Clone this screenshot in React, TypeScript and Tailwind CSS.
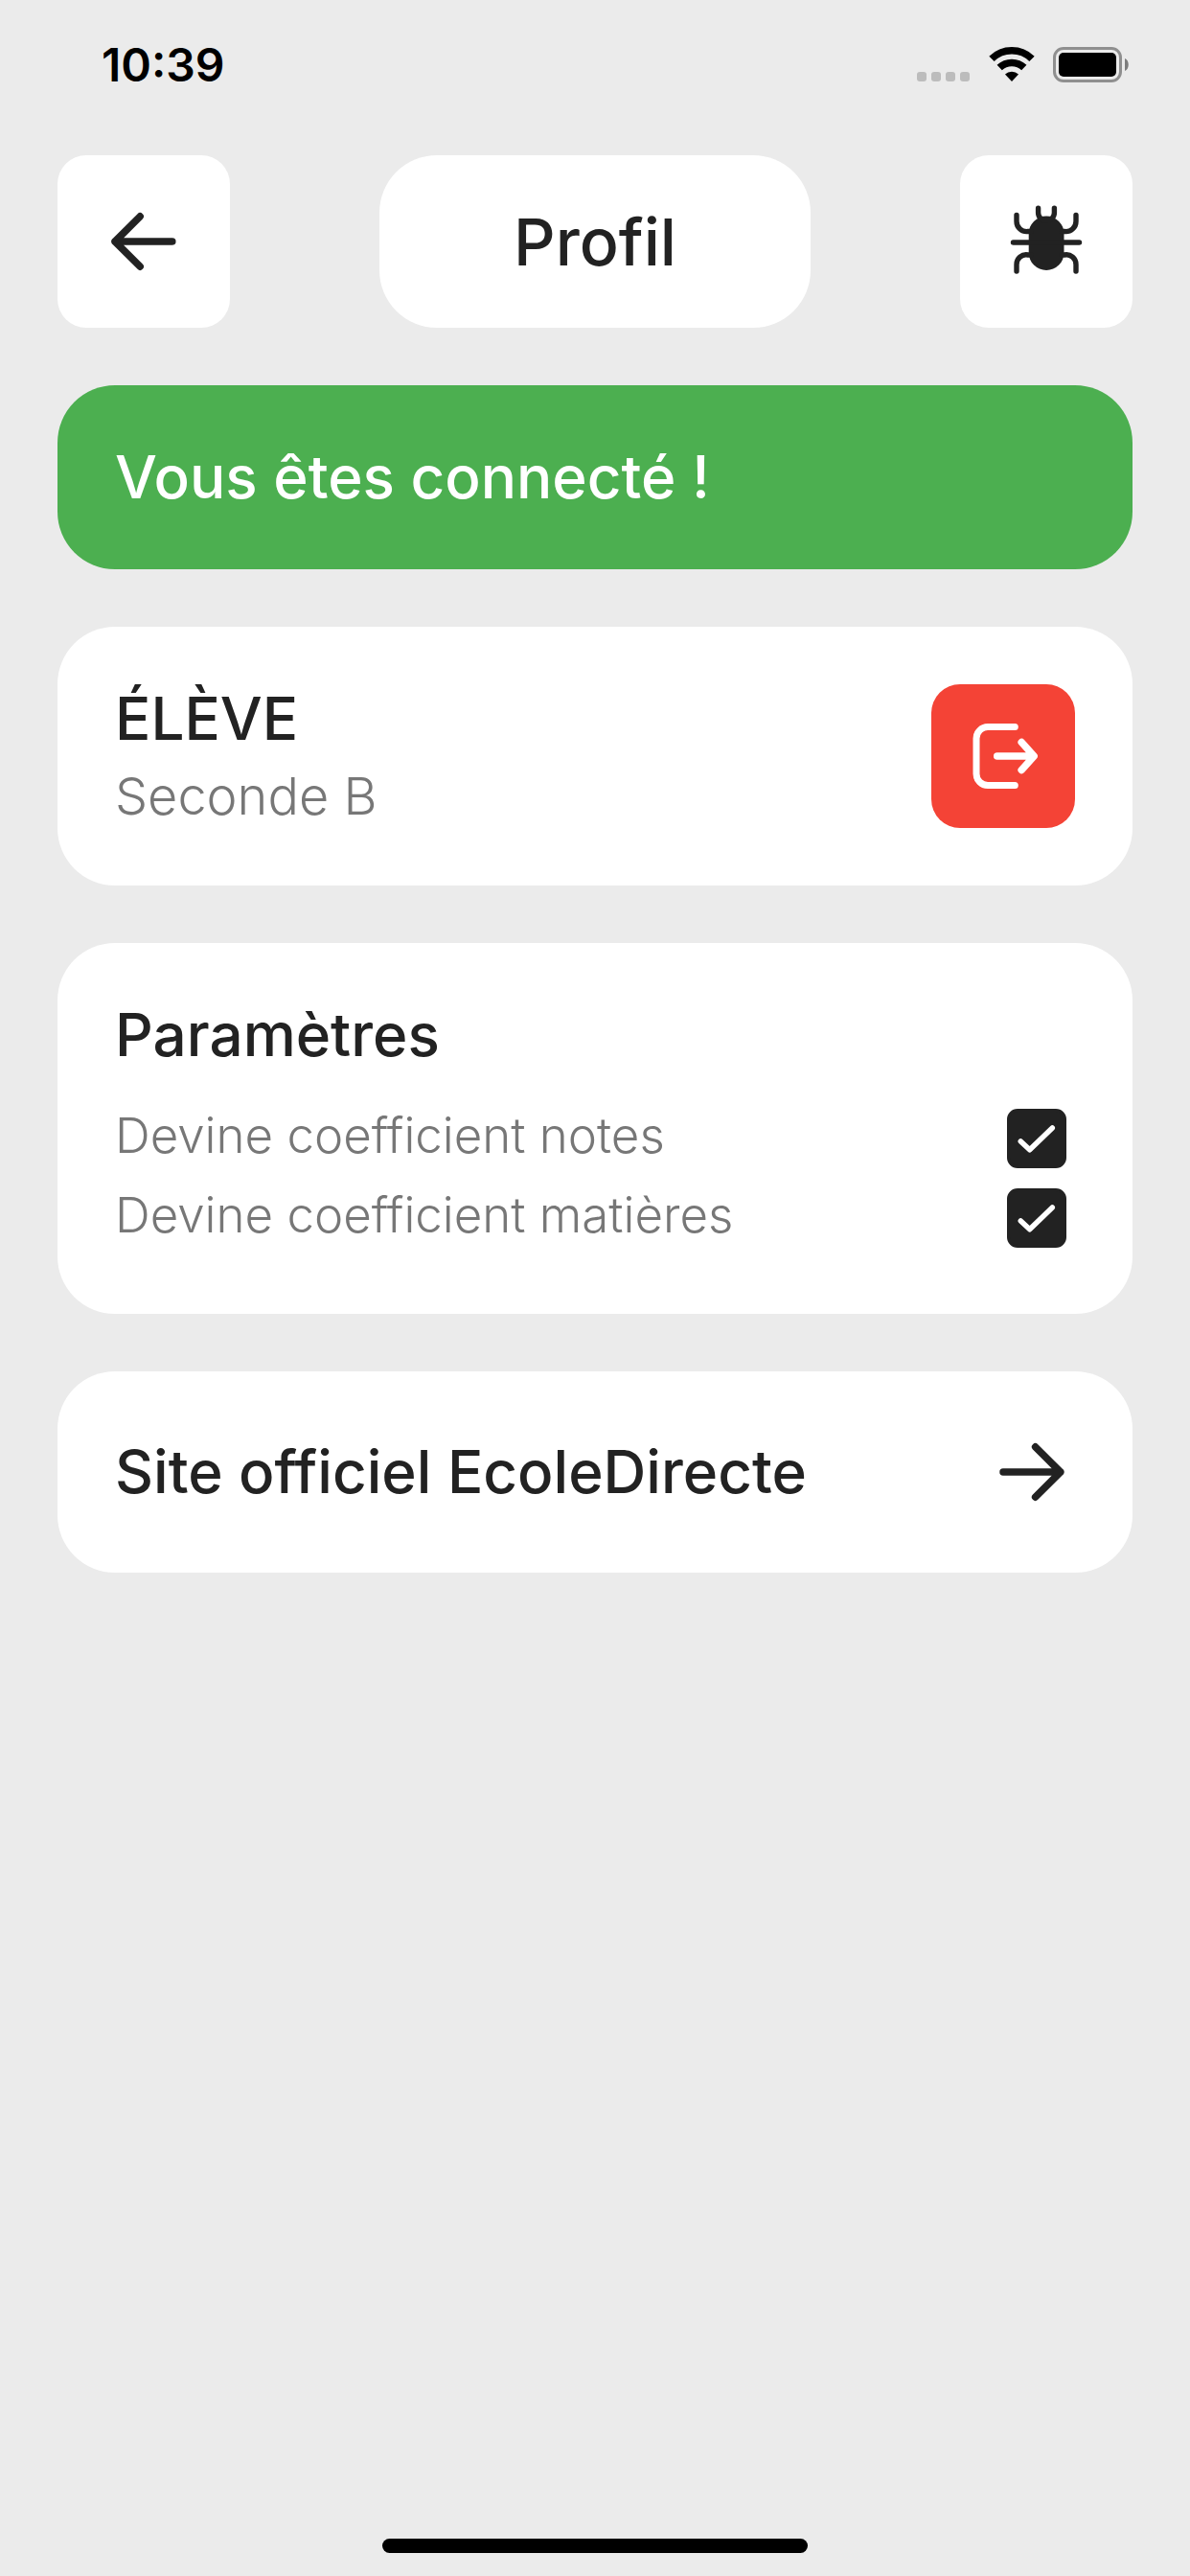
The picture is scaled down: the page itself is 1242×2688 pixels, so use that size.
import { useState } from "react";
import type { ReactNode } from "react";

function Wifi() {
  return (
    <svg className="h-9 w-12" viewBox="0 0 48 36" fill="none" stroke="#000" aria-hidden="true">
      <path d="M3 12.4a30 30 0 0 1 42 0" strokeWidth="7.6" />
      <path d="M11.2 21.6a18.5 18.5 0 0 1 25.6 0" strokeWidth="7.6" />
      <path d="M17 28.5a10 10 0 0 1 14 0L24 36Z" fill="#000" stroke="none" />
    </svg>
  );
}

function Battery() {
  return (
    <svg className="h-[38px] w-20" viewBox="0 0 80 38" aria-hidden="true">
      <rect x="1.5" y="1.5" width="69" height="34" rx="9.5" fill="none" stroke="#8f8f8f" strokeWidth="3" />
      <rect x="6" y="6" width="60" height="25" rx="5" fill="#000" />
      <path d="M75 12c5 2 5 11 0 13Z" fill="#7c7c7c" />
    </svg>
  );
}

function StatusBar() {
  return (
    <div className="flex h-[162px] items-start justify-between pt-[46px] pr-[63px] pl-[106px]">
      <span className="text-[48px] leading-[44px] font-semibold text-black">10:39</span>
      <div className="flex items-start pt-[3px]">
        <div className="mt-[26px] mr-5 flex gap-[5px]">
          {[0, 1, 2, 3].map((dot) => (
            <span key={dot} className="size-2.5 rounded-[3px] bg-[#bcbcbc]" />
          ))}
        </div>
        <Wifi />
        <span className="w-[19px]" />
        <Battery />
      </div>
    </div>
  );
}

function Icon({ children, width = 7.5 }: { children: ReactNode; width?: number }) {
  return (
    <svg
      className="size-20"
      viewBox="0 0 80 80"
      fill="none"
      stroke="currentColor"
      strokeWidth={width}
      strokeLinecap="round"
      strokeLinejoin="round"
      aria-hidden="true"
    >
      {children}
    </svg>
  );
}

function Setting({ id, label }: { id: string; label: string }) {
  const [checked, setChecked] = useState(true);
  return (
    <div className="flex h-[83px] items-center justify-between">
      <label htmlFor={id} className="pb-1.5 text-[51px] leading-[60px] font-light text-[#777]">
        {label}
      </label>
      <span className="grid size-[62px]">
        <input
          id={id}
          type="checkbox"
          checked={checked}
          onChange={() => setChecked(!checked)}
          className="col-start-1 row-start-1 size-[62px] appearance-none rounded-[11px] border-[3px] border-[#222] checked:bg-[#222]"
        />
        {checked && (
          <svg
            className="pointer-events-none col-start-1 row-start-1 size-[62px]"
            viewBox="0 0 62 62"
            fill="none"
            stroke="#fff"
            strokeWidth="5.5"
            strokeLinecap="round"
            strokeLinejoin="round"
            aria-hidden="true"
          >
            <path d="M14.3 34 23.7 42.8 47.3 20" />
          </svg>
        )}
      </span>
    </div>
  );
}

export default function App() {
  return (
    <div className="flex min-h-screen flex-col bg-[#ebebeb] font-['Inter',sans-serif] text-[#222]">
      <StatusBar />
      <header className="flex items-center justify-between px-[60px]">
        <button aria-label="Retour" className="grid size-[180px] place-items-center rounded-[30px] bg-white">
          <Icon>
            <path d="M69.8 40H10M36.2 13.8 10 40l26.2 26.2" />
          </Icon>
        </button>
        <h1 className="flex h-[180px] w-[450px] items-center justify-center rounded-[60px] bg-white text-[68px] font-medium">
          Profil
        </h1>
        <button aria-label="Signaler un bug" className="grid size-[180px] place-items-center rounded-[30px] bg-white">
          <Icon width={5.4}>
            <rect x="21.7" y="13.5" width="36.8" height="56.5" rx="18.4" fill="currentColor" stroke="none" />
            <path d="M31.6 5.3V10a8.4 8.4 0 0 0 16.8 0V5.3" />
            <path d="M9 12.5v6.500a10.500 10.500 0 0 0 12 10.500H24M71 12.500v6.500a10.500 10.500 0 0 1-12 10.500H56" />
            <path d="M5.500 41h69" />
            <path d="M9 71v-7a10 10 0 0 1 12-10H24M71 71v-7a10 10 0 0 0-12-10H56" />
          </Icon>
        </button>
      </header>

      <main className="flex flex-1 flex-col gap-[60px] px-[60px] pt-[60px]">
        <p className="rounded-[60px] bg-[#4caf50] p-[60px] text-[62px] leading-[72px] font-medium text-white">
          Vous êtes connecté !
        </p>

        <section className="flex items-start justify-between rounded-[60px] bg-white p-[60px]">
          <div className="flex flex-col gap-[15px]">
            <h2 className="text-[62px] leading-[72px] font-medium">ÉLÈVE</h2>
            <p className="text-[54px] leading-[60px] font-light text-[#777]">Seconde B</p>
          </div>
          <button
            aria-label="Se déconnecter"
            className="grid size-[150px] place-items-center rounded-[30px] bg-[#f44336] text-white"
          >
            <Icon>
              <path d="M52.3 9.6H24a12 12 0 0 0-12 12v37a12 12 0 0 0 12 12h28.3" strokeWidth="7" />
              <path d="M33.7 40H72M59.2 25.6 72.2 40 59.2 54.4" />
            </Icon>
          </button>
        </section>

        <section className="rounded-[60px] bg-white px-[60px] pt-[60px] pb-[59px]">
          <h2 className="text-[62px] leading-[72px] font-medium">Paramètres</h2>
          <div className="mt-[30px] pr-[9px]">
            <Setting id="coef-notes" label="Devine coefficient notes" />
            <Setting id="coef-matieres" label="Devine coefficient matières" />
          </div>
        </section>

        <a
          href="#ecoledirecte"
          className="flex h-[210px] items-center justify-between rounded-[60px] bg-white pr-[65px] pl-[60px] text-[62px] leading-[72px] font-medium"
        >
          Site officiel EcoleDirecte
          <Icon>
            <path d="M10 40h59.8M43.6 13.8 69.8 40 43.6 66.2" />
          </Icon>
        </a>
      </main>

      <div className="mx-auto mb-6 h-[15px] w-[444px] rounded-full bg-black" />
    </div>
  );
}
